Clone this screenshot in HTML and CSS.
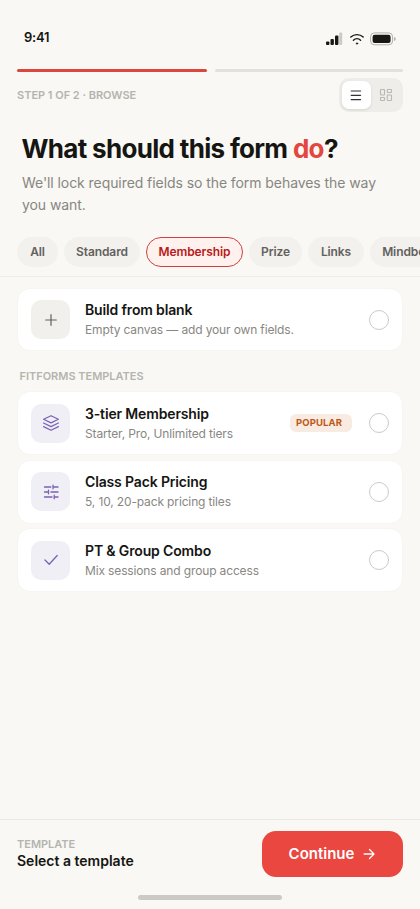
FILE: index.html
```html
<!DOCTYPE html>
<html lang="en">
<head>
<meta charset="utf-8">
<meta name="viewport" content="width=device-width, initial-scale=1">
<title>Choose a template</title>
<link rel="stylesheet" href="styles.css">
</head>
<body>
<div class="screen">
  <header class="status">
    <span class="time">9:41</span>
    <span class="indicators">
      <svg width="17" height="14" viewBox="0 0 17 14"><g fill="#171713"><rect x="0" y="9.5" width="3.4" height="3.5" rx="1"/><rect x="4.5" y="7" width="3.4" height="6" rx="1"/><rect x="9" y="3.5" width="3.4" height="9.5" rx="1"/></g><rect x="13.2" y="0.5" width="3" height="12.5" rx="1" fill="#cbcac7"/></svg>
      <svg width="16" height="14" viewBox="0 0 16 14" fill="none" stroke="#171713" stroke-width="1.4" stroke-linecap="round"><path d="M1.8 5.1a9 9 0 0 1 12.4 0M4.4 8.2a5.300 5.300 0 0 1 7.2 0"/><circle cx="8" cy="11.5" r=".7" fill="#171713" stroke-width=".8"/></svg>
      <svg width="27" height="14" viewBox="0 0 27 14"><rect x=".6" y=".9" width="22" height="11.9" rx="3.8" fill="none" stroke="#b0afac"/><rect x="2.6" y="2.8" width="18" height="8.2" rx="2.1" fill="#171713"/><path d="M24.2 5v4c2-.6 2-3.400 0-4z" fill="#aaa9a6"/></svg>
    </span>
  </header>
  <div class="progress"><i class="done"></i><i></i></div>
  <div class="steps">
    <span class="eyebrow step-label">STEP 1 OF 2 · BROWSE</span>
    <div class="toggle">
      <span class="view active"><svg width="14" height="14" viewBox="0 0 14 14" fill="none" stroke="#333330" stroke-width="1.2" stroke-linecap="round"><path d="M2.200 3h9.400M2.200 7.300h9.400M2.200 11.600h9.400"/></svg></span>
      <span class="view"><svg width="14" height="14" viewBox="0 0 14 14" fill="none" stroke="#b9b8b5" stroke-width="1.1"><rect x="1.500" y="1.500" width="4" height="5.500" rx=".6"/><rect x="8.300" y="1.500" width="4.200" height="3" rx=".6"/><rect x="1.500" y="9.500" width="4" height="3" rx=".6"/><rect x="8.300" y="7" width="4.200" height="5.500" rx=".6"/></svg></span>
    </div>
  </div>
  <section class="intro">
    <h1>What should this form <em>do</em>?</h1>
    <p>We'll lock required fields so the form behaves the way<br>you want.</p>
  </section>
  <nav class="chips">
    <span class="chip all">All</span><span class="chip standard">Standard</span><span class="chip membership">Membership</span><span class="chip prize">Prize</span><span class="chip links">Links</span><span class="chip mindbody">Mindbody</span>
  </nav>
  <main>
    <article class="card blank">
      <span class="tile"><svg width="20" height="20" viewBox="0 0 20 20" fill="none" stroke="#62615d" stroke-width="1.200" stroke-linecap="round"><path d="M10 4.700v10.600M4.700 10h10.600"/></svg></span>
      <div class="copy"><h2>Build from blank</h2><p>Empty canvas — add your own fields.</p></div>
      <span class="radio"></span>
    </article>
    <h3 class="eyebrow group-label">FITFORMS TEMPLATES</h3>
    <div class="list">
      <article class="card">
        <span class="tile violet"><svg width="20" height="20" viewBox="0 0 20 20" fill="none" stroke="#7962b3" stroke-width="1.200" stroke-linecap="round" stroke-linejoin="round"><path d="M10 2.700 17.400 6.300 10 9.900 2.600 6.300ZM2.600 10l7.400 3.600 7.400-3.600M2.600 13.600 10 17.200l7.400-3.600"/></svg></span>
        <div class="copy"><h2>3-tier Membership</h2><p>Starter, Pro, Unlimited tiers</p></div>
        <span class="badge">POPULAR</span>
        <span class="radio"></span>
      </article>
      <article class="card">
        <span class="tile violet"><svg width="20" height="20" viewBox="0 0 20 20" fill="none" stroke="#7962b3" stroke-width="1.300" stroke-linecap="round"><path d="M3.500 5h6.300M12 5h5M12 3.200v3.600M3.500 10H7M10 10h7M7.500 8.200v3.600M3.500 15h7.500M13.500 15H17M13.200 13.200v3.600"/></svg></span>
        <div class="copy"><h2>Class Pack Pricing</h2><p>5, 10, 20-pack pricing tiles</p></div>
        <span class="radio"></span>
      </article>
      <article class="card">
        <span class="tile violet"><svg width="20" height="20" viewBox="0 0 20 20" fill="none" stroke="#7962b3" stroke-width="1.300" stroke-linecap="round" stroke-linejoin="round"><path d="m4 10 4.200 4.200 8-8.700"/></svg></span>
        <div class="copy"><h2>PT &amp; Group Combo</h2><p>Mix sessions and group access</p></div>
        <span class="radio"></span>
      </article>
    </div>
  </main>
  <footer>
    <div class="bar">
      <div class="selection"><span class="eyebrow">TEMPLATE</span><strong>Select a template</strong></div>
      <button class="continue">Continue<svg width="14" height="14" viewBox="0 0 14 14" fill="none" stroke="#fff" stroke-width="1.300" stroke-linecap="round" stroke-linejoin="round"><path d="M2.200 7h9.600M7.500 2.500 12 7l-4.500 4.500"/></svg></button>
    </div>
    <div class="home"></div>
  </footer>
</div>
</body>
</html>
```
FILE: styles.css
```css
* { box-sizing: border-box; }
body { margin: 0; background: #f9f8f4; font-family: Inter, sans-serif; color: #151512; }
h1, h2, h3, p { margin: 0; }
svg { display: block; flex: none; }
.screen { width: 420px; height: 909px; overflow: hidden; display: flex; flex-direction: column; }
.status { height: 69px; padding: 27px 23px 0 24px; display: flex; justify-content: space-between; align-items: flex-start; }
.time { font-size: 13px; line-height: 20px; font-weight: 600; letter-spacing: -.2px; }
.indicators { display: flex; gap: 5px; padding-top: 5px; }
.indicators svg:first-child { margin-right: 1px; }
.progress { display: grid; grid-template-columns: 190px 188px; gap: 8px; padding-left: 17px; }
.progress i { height: 3px; border-radius: 2px; background: #e2e1de; }
.progress .done { background: #db463f; }
.steps { height: 48px; padding: 6px 17px 0; display: flex; justify-content: space-between; align-items: flex-start; }
.eyebrow { font-size: 11px; line-height: 14px; font-weight: 600; color: #b5b4af; letter-spacing: -.02px; }
.step-label { padding-top: 10px; }
.toggle { width: 64px; height: 34px; border-radius: 10px; padding: 3px; background: #eeedea; display: flex; gap: 1px; }
.view { width: 29px; height: 28px; border-radius: 7px; display: flex; align-items: center; justify-content: center; }
.view.active { background: #fff; box-shadow: 0 1px 3px #0000001c; }
.intro { padding: 12px 22px 0; height: 117px; }
h1 { font-size: 26px; line-height: 34px; font-weight: 700; letter-spacing: -.68px; white-space: nowrap; margin-left: -.5px; }
h1 em { font-style: normal; color: #e44640; }
.intro p { margin-top: 6px; font-size: 14px; line-height: 22px; color: #878681; white-space: nowrap; letter-spacing: -.07px; }
.chips { height: 40px; padding-left: 17px; display: flex; gap: 6px; border-bottom: 1px solid #eeede9; overflow: hidden; }
.chip { height: 30px; flex: none; border-radius: 15px; background: #f2f1ee; color: #62615d; font-size: 12px; line-height: 30px; font-weight: 600; text-align: center; letter-spacing: -.1px; }
.all { width: 41px; }
.standard { width: 76px; }
.membership { width: 97px; background: #fff1ee; border: 1px solid #ce403e; line-height: 28px; color: #b91918; }
.prize { width: 53px; }
.links { width: 56px; }
.mindbody { width: 82px; }
main { padding: 12px 18px 0; flex: 1; }
.card { height: 62px; border-radius: 12px; background: #fff; display: flex; align-items: center; padding: 0 13px; box-shadow: 0 0 2px #0000000d; }
.card.blank { height: 61px; }
.tile { width: 39px; height: 39px; border-radius: 10px; background: #f1f0ed; display: flex; align-items: center; justify-content: center; }
.violet { background: #f1eff6; }
.copy { margin-left: 15px; flex: 1; white-space: nowrap; }
.copy h2 { font-size: 14px; line-height: 20px; font-weight: 600; letter-spacing: -.15px; }
.copy p { font-size: 12px; line-height: 18px; margin-top: 1px; color: #888782; letter-spacing: -.14px; }
.radio { width: 20px; height: 20px; border: 1px solid #cbcac7; border-radius: 50%; }
.badge { width: 62px; height: 18px; margin-right: 17px; border-radius: 6px; background: #f8ebe2; color: #bf5717; font-size: 9.500px; line-height: 18px; font-weight: 700; padding-left: 6px; letter-spacing: .1px; }
.group-label { margin: 19px 0 9px 1.500px; }
.list { display: grid; gap: 6.500px; }
footer { height: 90px; border-top: 1px solid #eae9e5; padding: 11px 17px 0; }
.bar { display: flex; justify-content: space-between; }
.selection { display: flex; flex-direction: column; padding-top: 6px; }
.selection strong { font-size: 14px; line-height: 18px; font-weight: 600; margin-top: 1px; }
.continue { width: 141px; height: 46px; border: 0; border-radius: 14px; background: #e94740; color: #fff; font: 600 15px/20px Inter, sans-serif; display: flex; align-items: center; justify-content: center; gap: 8px; padding: 0; }
.home { width: 144px; height: 5px; border-radius: 3px; background: #cbcac7; margin: 18px auto 0; }
```
